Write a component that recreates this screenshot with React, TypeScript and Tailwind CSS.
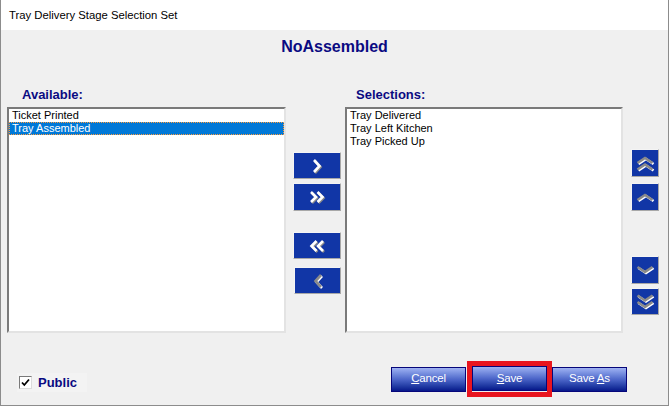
import React from "react";

type Dir = "right" | "left" | "up" | "down";

// map a point drawn for a right-pointing chevron into the wanted direction (20x20 box)
function tf(x: number, y: number, dir: Dir): [number, number] {
  if (dir === "left") return [20 - x, y];
  if (dir === "down") return [20 - y, x];
  if (dir === "up") return [y, 20 - x];
  return [x, y];
}

function Chevron({ dir, shapes, disabled }: { dir: Dir; shapes: number[][][]; disabled?: boolean }) {
  const main = disabled ? "#8a8a8a" : "#ffffff";
  const shade = disabled ? "#ffffff" : "#8a8a8a";
  const pts = (s: number[][], d: number) =>
    s.map(([x, y]) => tf(x, y, dir)).map(([x, y]) => `${x + d},${y + d}`).join(" ");
  return (
    <svg width="20" height="20" viewBox="0 0 20 20">
      {shapes.map((s, i) => (
        <polyline key={"s" + i} points={pts(s, 1)} fill="none" stroke={shade} strokeWidth="2.6" strokeLinejoin="miter" />
      ))}
      {shapes.map((s, i) => (
        <polyline key={"m" + i} points={pts(s, 0)} fill="none" stroke={main} strokeWidth="2.6" strokeLinejoin="miter" />
      ))}
    </svg>
  );
}

const midSingle = [[[7, 4], [12.5, 10], [7, 16]]];
const midDouble = [
  [[4, 5], [9, 10], [4, 15]],
  [[10.5, 5], [15.5, 10], [10.5, 15]],
];
const sideSingle = [[[7, 2.5], [12, 10], [7, 17.5]]];
const sideDouble = [
  [[3.5, 2.5], [8.5, 10], [3.5, 17.5]],
  [[10, 2.5], [15, 10], [10, 17.5]],
];

function ArrowBtn({ className, children }: { className?: string; children: React.ReactNode }) {
  return (
    <div
      className={
        "flex items-center justify-center bg-[#1136a6] border-r border-b border-[#a8a8a8] border-t border-l border-t-[#f4f4f4] border-l-[#f4f4f4] " +
        (className ?? "")
      }
    >
      {children}
    </div>
  );
}

function ListBox({ items, selected }: { items: string[]; selected?: number }) {
  return (
    <div className="h-[226px] bg-white border-2 border-t-[#7a7a7a] border-l-[#7a7a7a] border-r-[#e3e3e3] border-b-[#e3e3e3]">
      {items.map((it, i) =>
        i === selected ? (
          <div
            key={it}
            className="h-[13px] leading-[11px] pl-[2px] bg-[#0078d7] text-white border border-dotted border-[#ff9d3c]"
          >
            {it}
          </div>
        ) : (
          <div key={it} className="h-[13px] leading-[13px] pl-[3px] text-black">
            {it}
          </div>
        )
      )}
    </div>
  );
}

function BlueBtn({ children }: { children: React.ReactNode }) {
  return (
    <div className="w-[75px] h-[25px] flex items-center justify-center border border-[#06067a] bg-gradient-to-b from-[#9fb2f2] via-[#4d66c9] to-[#08168a] text-white text-[11.5px] tracking-[-0.2px]">
      {children}
    </div>
  );
}

export default function App() {
  return (
    <div
      className="w-[669px] h-[406px] overflow-hidden flex flex-col bg-[#f0f0f0] border-l border-r border-b border-[#8c8c8c] text-[11px]"
      style={{ fontFamily: '"Liberation Sans", Arial, sans-serif' }}
    >
      {/* title bar */}
      <div className="h-[30px] shrink-0 bg-white flex items-center pl-[8px] text-[11.3px] text-black pt-[1px]">
        Tray Delivery Stage Selection Set
      </div>

      <div className="pt-[8px] text-center text-[16px] leading-[18px] font-bold text-[#0a0a82]">NoAssembled</div>

      {/* main row */}
      <div className="flex mt-[31px] pl-[6px]">
        <div className="w-[279px]">
          <div className="h-[20px] pl-[15px] text-[13px] leading-[15px] font-bold text-[#0a0a82]">Available:</div>
          <ListBox items={["Ticket Printed", "Tray Assembled"]} selected={1} />
        </div>

        <div className="w-[48px] ml-[7px] pt-[65px] flex flex-col">
          <ArrowBtn className="w-[48px] h-[27px]">
            <Chevron dir="right" shapes={midSingle} />
          </ArrowBtn>
          <ArrowBtn className="w-[48px] h-[28px] mt-[4px]">
            <Chevron dir="right" shapes={midDouble} />
          </ArrowBtn>
          <ArrowBtn className="w-[48px] h-[27px] mt-[21px]">
            <Chevron dir="left" shapes={midDouble} />
          </ArrowBtn>
          <ArrowBtn className="w-[47px] h-[27px] mt-[8px] ml-[1px]">
            <Chevron dir="left" shapes={midSingle} disabled />
          </ArrowBtn>
        </div>

        <div className="w-[278px] ml-[4px]">
          <div className="h-[20px] pl-[11px] text-[13px] leading-[15px] font-bold text-[#0a0a82]">Selections:</div>
          <ListBox items={["Tray Delivered", "Tray Left Kitchen", "Tray Picked Up"]} />
        </div>

        <div className="w-[28px] ml-[8px] pt-[62px] flex flex-col">
          <ArrowBtn className="w-[28px] h-[28px]">
            <Chevron dir="up" shapes={sideDouble} disabled />
          </ArrowBtn>
          <ArrowBtn className="w-[28px] h-[28px] mt-[6px]">
            <Chevron dir="up" shapes={sideSingle} disabled />
          </ArrowBtn>
          <ArrowBtn className="w-[28px] h-[28px] mt-[45px]">
            <Chevron dir="down" shapes={sideSingle} disabled />
          </ArrowBtn>
          <ArrowBtn className="w-[28px] h-[27px] mt-[4px]">
            <Chevron dir="down" shapes={sideDouble} disabled />
          </ArrowBtn>
        </div>
      </div>

      {/* bottom row */}
      <div className="flex mt-[28px] h-[36px]">
        <div className="ml-[16px] mt-[12px] h-[19px] w-[70px] flex items-center bg-[#f3f3f3]">
          <div className="ml-[2px] w-[13px] h-[13px] bg-white border border-t-[#7a7a7a] border-l-[#7a7a7a] border-r-[#dcdcdc] border-b-[#dcdcdc] flex items-center justify-center">
            <svg width="9" height="9" viewBox="0 0 9 9">
              <polyline points="1,4.5 3.3,7 8,1.5" fill="none" stroke="#000" strokeWidth="1.8" />
            </svg>
          </div>
          <span className="ml-[6px] text-[13px] font-bold text-[#0a0a82]">Public</span>
        </div>

        <div className="ml-[304px] flex items-center">
          <BlueBtn>
            <span>
              <span className="underline">C</span>ancel
            </span>
          </BlueBtn>
          <div className="ml-[1px] border-[5px] border-[#e8151f] pb-[1px]">
            <BlueBtn>
              <span>
                <span className="underline">S</span>ave
              </span>
            </BlueBtn>
          </div>
          <BlueBtn>
            <span>
              Save <span className="underline">A</span>s
            </span>
          </BlueBtn>
        </div>
      </div>
    </div>
  );
}
